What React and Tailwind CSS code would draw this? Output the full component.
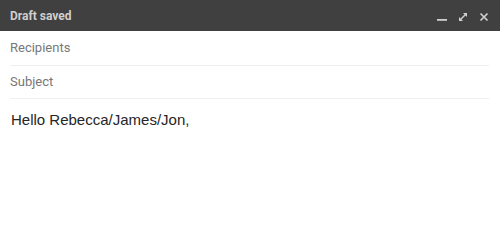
export default function App() {
  return (
    <div className="w-[500px] h-[250px] bg-white flex flex-col font-['Roboto',sans-serif]">
      <div className="h-[31px] bg-[#404040] flex items-center justify-between pl-[10px] pr-[10px]">
        <span className="text-[12px] font-bold text-[#cfcfcf]">Draft saved</span>
        <div className="flex items-center gap-[9px] text-[#cfcfcf] mt-[2px]">
          <svg width="12" height="12" viewBox="0 0 12 12">
            <rect x="1" y="8" width="10" height="1.8" fill="currentColor" />
          </svg>
          <svg width="12" height="12" viewBox="0 0 12 12">
            <path d="M3.5 8.5 L8.5 3.5" stroke="currentColor" strokeWidth="1.4" />
            <path d="M6 2 H10 V6 Z" fill="currentColor" />
            <path d="M2 6 V10 H6 Z" fill="currentColor" />
          </svg>
          <svg width="12" height="12" viewBox="0 0 12 12">
            <path d="M2.5 2.5 L9.5 9.5 M9.5 2.5 L2.5 9.5" stroke="currentColor" strokeWidth="1.7" />
          </svg>
        </div>
      </div>
      <div className="px-[10px] pr-[11px]">
        <div className="h-[35px] flex items-center border-b border-[#efefef] text-[13px] text-[#777]">
          Recipients
        </div>
        <div className="h-[33px] flex items-center border-b border-[#efefef] text-[13px] text-[#777]">
          Subject
        </div>
        <div className="pt-[10px] pl-px text-[15px] text-[#262626] font-['Liberation_Sans',Arial,sans-serif]">
          Hello Rebecca/James/Jon,
        </div>
      </div>
    </div>
  )
}
